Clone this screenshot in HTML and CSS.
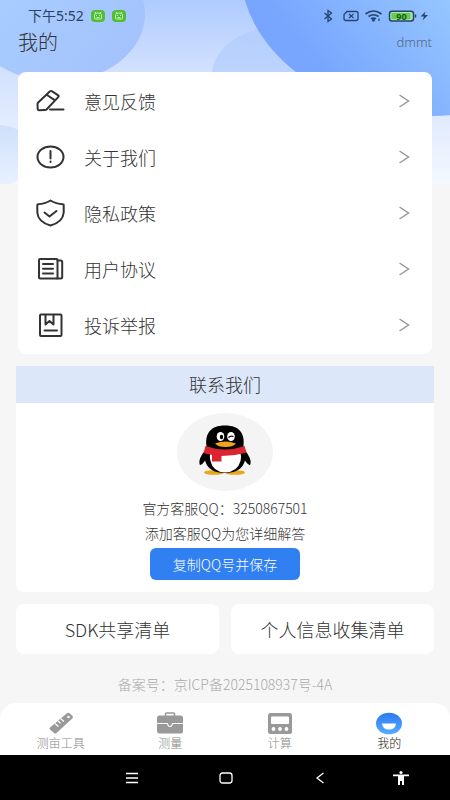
FILE: index.html
```html
<!DOCTYPE html>
<html lang="zh-CN">
<head>
<meta charset="utf-8">
<meta name="viewport" content="width=device-width, initial-scale=1">
<title>我的</title>
<link rel="stylesheet" href="styles.css">
</head>
<body>
<div class="app">
  <svg class="backdrop" viewBox="0 0 450 184" preserveAspectRatio="none" aria-hidden="true">
    <defs>
      <linearGradient id="sky" x1="0" y1="0" x2="0" y2="1"><stop offset="0" stop-color="#aecbff"/><stop offset=".42" stop-color="#d5e3fe"/><stop offset="1" stop-color="#f4f8ff"/></linearGradient>
      <linearGradient id="orbLeft" x1="0" y1="0" x2="1" y2=".6"><stop offset="0" stop-color="#a9d0ff"/><stop offset="1" stop-color="#a4c3fd"/></linearGradient>
      <linearGradient id="orbRight" gradientUnits="userSpaceOnUse" x1="450" y1="0" x2="340" y2="90"><stop offset="0" stop-color="#96c6ff"/><stop offset="1" stop-color="#78a6fe"/></linearGradient>
      <linearGradient id="orbLow" x1="0" y1="0" x2="0" y2="1"><stop offset="0" stop-color="#cfe0fc"/><stop offset="1" stop-color="#e8f1fe"/></linearGradient>
      <linearGradient id="orbMid" x1="0" y1="0" x2="0" y2="1"><stop offset="0" stop-color="#b3cdfd"/><stop offset="1" stop-color="#c8dbfe"/></linearGradient>
    </defs>
    <rect width="450" height="184" fill="url(#sky)"/>
    <ellipse cx="283" cy="75" rx="71" ry="49" fill="url(#orbMid)"/>
    <ellipse cx="57" cy="14" rx="88" ry="68" fill="url(#orbLeft)"/>
    <ellipse cx="-2" cy="155" rx="38" ry="30" fill="url(#orbLow)"/>
    <ellipse cx="432" cy="-33" rx="192" ry="149" fill="url(#orbRight)"/>
  </svg>

  <div class="status">
    <span class="clock">下午5:52</span>
    <svg class="bot" width="14" height="12" viewBox="0 0 14 12"><rect width="14" height="12" rx="4" fill="#4fbe35"/><path d="M3.500 5a3.500 2 0 0 1 7 0v3a1 1 0 0 1-1 1h-5a1 1 0 0 1-1-1zM4 2l1 1.500M10 2L9 3.500" fill="none" stroke="#c9f3b9"/><path d="M5.500 5v1M8.500 5v1M5.500 7.500h3" stroke="#c9f3b9" fill="none"/></svg>
    <svg class="bot" width="14" height="12" viewBox="0 0 14 12"><rect width="14" height="12" rx="4" fill="#4fbe35"/><path d="M3.500 5a3.500 2 0 0 1 7 0v3a1 1 0 0 1-1 1h-5a1 1 0 0 1-1-1zM4 2l1 1.500M10 2L9 3.500" fill="none" stroke="#c9f3b9"/><path d="M5.500 5v1M8.500 5v1M5.500 7.500h3" stroke="#c9f3b9" fill="none"/></svg>
    <svg class="signals" width="106" height="14" viewBox="323 9.500 106 14" fill="none" stroke="#27446f" stroke-width="1.300">
      <path d="M324.500 13.500l7 6-3.500 2.500V11l3.500 2.500-7 6"/>
      <path d="M347 12h9q2 0 2 2v5q0 2-2 2h-10q-2 0-2-2v-4z"/><path d="M349 14.500l4.500 4M353.500 14.500l-4.500 4"/>
      <path d="M365.500 14.500q8-6 16 0M368.500 17q5-3.500 10 0M371 19.300q2.500-1.500 5 0" stroke-width="1.700"/><circle cx="373.500" cy="20.800" r=".8" fill="#27446f"/><path d="M379 19v2.500"/>
      <rect x="389.500" y="11.700" width="24" height="9.800" rx="2.500" fill="#b5dcb5" stroke-width="1.500"/><rect x="391.500" y="13.500" width="19" height="6.200" fill="#64cf4b" stroke="none"/><path d="M415.500 15v3" stroke-width="1.500"/>
      <text x="401.500" y="20" text-anchor="middle" class="charge">90</text>
      <path d="M425.500 12l-5 5h3.500l-1.500 4 5.500-5.500h-3.500z" fill="#27446f" stroke="none"/>
    </svg>
  </div>

  <header class="top">
    <h1>我的</h1>
    <span class="user">dmmt</span>
  </header>

  <main>
    <nav class="menu" aria-label="设置">
      <a href="#feedback"><svg class="icon" viewBox="0 0 28 28"><path d="M14 4.300q1-.8 2.200 0l6 4q1 .8 0 1.800L10.500 22.500q-.5.500-1.500.5L3 23.300q-1.300 0-1.300-1.200L1.500 17q0-.8.700-1.500zM11 8l8 5.300"/><path d="M14 22.500h13.500"/></svg><span>意见反馈</span><svg class="arrow" viewBox="0 0 12 14"><path d="M1.500 1l9 6-9 6"/></svg></a>
      <a href="#about"><svg class="icon" viewBox="0 0 28 28"><ellipse cx="14.500" cy="14" rx="13" ry="10.500"/><path d="M14.500 8v7.500M14.500 18.500v.5"/></svg><span>关于我们</span><svg class="arrow" viewBox="0 0 12 14"><path d="M1.500 1l9 6-9 6"/></svg></a>
      <a href="#privacy"><svg class="icon" viewBox="0 0 28 28"><path d="M14.500 1.500Q9 5 2 5.300q-.7 0-.7.700v7.500Q2 23 14.500 26.500 27 23 27.700 13.500V6q0-.7-.7-.7-7-.3-12.500-3.800z"/><path d="M8.500 13.500l5 4 7-5.500"/></svg><span>隐私政策</span><svg class="arrow" viewBox="0 0 12 14"><path d="M1.500 1l9 6-9 6"/></svg></a>
      <a href="#terms"><svg class="icon" viewBox="0 0 28 28"><rect x="3" y="4" width="18.500" height="19.500" rx="1"/><path d="M21.500 5.500h3.200q1.500 0 1.500 1.500v15q0 1.500-1.500 1.500H21M7 9h10M7 13.800h10M7 18.500h10"/></svg><span>用户协议</span><svg class="arrow" viewBox="0 0 12 14"><path d="M1.500 1l9 6-9 6"/></svg></a>
      <a href="#report"><svg class="icon" viewBox="0 0 28 28"><rect x="4" y="3.500" width="21.500" height="21.500" rx="1"/><path d="M9.500 4v9.500l4-3.500 4 3.500V4M8.500 19.500h12.500"/></svg><span>投诉举报</span><svg class="arrow" viewBox="0 0 12 14"><path d="M1.500 1l9 6-9 6"/></svg></a>
    </nav>

    <section class="contact">
      <h2>联系我们</h2>
      <div class="contact-body">
        <svg class="avatar" width="96" height="78" viewBox="0 0 96 78" role="img" aria-label="QQ">
          <ellipse cx="48" cy="39" rx="48" ry="39" fill="#f4f4f4"/>
          <ellipse cx="37" cy="59.500" rx="10" ry="2.300" fill="#e9a51c"/><ellipse cx="58" cy="59.500" rx="10" ry="2.300" fill="#e9a51c"/>
          <path d="M29 36Q21 46 22.500 51q1 3 6-4M67 36q8 10 6.500 15-1 3-6-4" fill="#000"/>
          <path d="M29.500 33C28 21 33 12.500 48 12.500S68 21 66.500 33q4 9 1 16-4 11-19.500 11t-19.500-11q-3-7 1-16z" fill="#000"/>
          <path d="M33 40h30.500q1 3 0 8-3 11-15.500 11.500Q36 59 33.500 48q-1-5-.5-8z" fill="#fff"/>
          <path d="M28.500 33q19.500 7 39 0l2 6.500q-10 3-25 3.500v5.500h-9.500v-6.500q-5-.8-8.500-2z" fill="#dc2430"/>
          <ellipse cx="43.500" cy="23.500" rx="3.800" ry="4.500" fill="#fff"/><ellipse cx="54" cy="23.500" rx="3.800" ry="4.500" fill="#fff"/>
          <ellipse cx="44.500" cy="24" rx="1.700" ry="2.200" fill="#000"/><path d="M51.500 24.500q2-2 5-1" fill="none" stroke="#000" stroke-width="1.300"/>
          <path d="M38 30.500q10-4 21 0-3 3.500-10.500 3.500T38 30.500z" fill="#f4a321"/>
        </svg>
        <p>官方客服QQ：3250867501</p>
        <p>添加客服QQ为您详细解答</p>
        <button type="button" class="copy">复制QQ号并保存</button>
      </div>
    </section>

    <div class="lists">
      <a href="#sdk">SDK共享清单</a>
      <a href="#collect">个人信息收集清单</a>
    </div>
    <p class="record">备案号：京ICP备2025108937号-4A</p>
  </main>

  <nav class="tabs" aria-label="主导航">
    <a href="#tools"><svg width="28" height="24" viewBox="0 0 28 24"><path d="M3 16.500L20 2.300q1.500-1 2.500 0l3 2.700q1 1.200 0 2.300L9.500 22q-1.300 1-2.500 0l-4-3.500q-1-1 0-2z" fill="#999"/><path d="M8 12.500l3.500 3M11 10l2.500 2.200M13.500 7.500l3.500 3" stroke="#fff" stroke-width="1.200"/><circle cx="21.500" cy="6" r="1.300" fill="#fff"/></svg><span>测亩工具</span></a>
    <a href="#measure"><svg width="28" height="24" viewBox="0 0 28 24"><path d="M9.500 5V3q0-1 1-1h7q1 0 1 1v2" fill="none" stroke="#999" stroke-width="1.600"/><rect x="1" y="4.500" width="26" height="18" rx="2.500" fill="#999"/><path d="M1 12.500h10.500q.5 3 2.500 3t2.500-3H27" stroke="#fff" stroke-width="1.200" fill="none"/></svg><span>测量</span></a>
    <a href="#calc"><svg width="28" height="24" viewBox="0 0 28 24"><rect x="2" y="2" width="24" height="21" rx="2.500" fill="#999"/><rect x="5" y="5.500" width="18" height="7.500" rx="1" fill="#fff"/><circle cx="7.500" cy="18" r="1.900" fill="#fff"/><circle cx="14" cy="18" r="1.900" fill="#fff"/><circle cx="20.500" cy="18" r="1.900" fill="#fff"/></svg><span>计算</span></a>
    <a href="#mine" class="active" aria-current="page"><svg width="28" height="24" viewBox="0 0 28 24"><defs><linearGradient id="face" x1="0" y1="0" x2="0" y2="1"><stop offset="0" stop-color="#2b7af0"/><stop offset="1" stop-color="#58abff"/></linearGradient></defs><ellipse cx="14" cy="12.500" rx="13" ry="10.800" fill="url(#face)"/><path d="M7 12.500h14q-.5 6-7 6t-7-6z" fill="#fff"/></svg><span>我的</span></a>
  </nav>

  <div class="system">
    <svg width="14" height="14" viewBox="0 0 14 14"><path d="M1 2.500h12M1 7h12M1 11.500h12"/></svg>
    <svg width="14" height="14" viewBox="0 0 14 14"><rect x="1" y="2" width="12" height="10" rx="2.500"/></svg>
    <svg width="14" height="14" viewBox="0 0 14 14"><path d="M10.500 2L4 7l6.500 5"/></svg>
    <svg class="assist" width="16" height="16" viewBox="0 0 16 16"><g fill="#fff" stroke="none"><circle cx="8" cy="2.500" r="1.600"/><path d="M0 4.500h16v1.800h-5V15H9v-4H7v4H5V6.300H0z"/></g></svg>
  </div>
</div>
</body>
</html>
```
FILE: styles.css
```css
* { box-sizing: border-box; }

body {
  margin: 0;
  background: #f6f6f6;
  color: #333;
  font-family: "Noto Sans CJK SC", "Noto Sans", sans-serif;
  font-weight: 300;
}

h1, h2, p { margin: 0; font-weight: inherit; }
a { color: inherit; text-decoration: none; }
svg { display: block; flex: none; }

.app {
  position: relative;
  display: flex;
  flex-direction: column;
  min-height: 100vh;
}

.backdrop {
  position: absolute;
  top: 0;
  left: 0;
  z-index: -1;
  width: 100%;
  height: 184px;
}

.status {
  display: flex;
  align-items: center;
  gap: 7px;
  padding: 6px 21px 0 28px;
  font-size: 14px;
  line-height: 20px;
  color: #2c4164;
}
.clock {
  font-family: "Noto Sans", "Noto Sans CJK SC", sans-serif;
  font-weight: 400;
}
.signals { margin-left: auto; }
.charge {
  font: 700 9px "Noto Sans", sans-serif;
  fill: #175b22;
  stroke: none;
}

.top {
  display: flex;
  align-items: center;
  justify-content: space-between;
  height: 46px;
  padding: 0 18px 14px;
}
h1 {
  font-size: 20px;
  line-height: 32px;
}
.user {
  font-family: "Noto Sans", sans-serif;
  font-size: 13px;
  color: #526783;
}

main { flex: 1; padding: 0 16px; }

.menu {
  margin: 0 2px 12px;
  padding: 1px 0;
  background: #fff;
  border-radius: 8px;
}
.menu a {
  display: flex;
  align-items: center;
  gap: 20px;
  height: 56px;
  padding: 0 22px 0 18px;
  font-size: 18px;
}
.icon {
  width: 28px;
  height: 28px;
  overflow: visible;
  fill: none;
  stroke: #333;
  stroke-width: 2;
  stroke-linecap: round;
  stroke-linejoin: round;
}
.arrow {
  width: 12px;
  height: 14px;
  margin-left: auto;
  fill: none;
  stroke: #999;
  stroke-width: 1.5;
}

.contact {
  overflow: hidden;
  background: #fff;
  border-radius: 0 0 8px 8px;
}
.contact h2 {
  background: #dce8fa;
  font-size: 18px;
  line-height: 37px;
  text-align: center;
}
.contact-body {
  display: flex;
  flex-direction: column;
  align-items: center;
  padding: 10px 0 12px;
}
.avatar { margin-bottom: 5px; }
.contact p {
  font-size: 14px;
  line-height: 25px;
}
.copy {
  width: 150px;
  height: 32px;
  margin-top: 2px;
  padding: 0;
  border: 0;
  border-radius: 6px;
  background: #3080f2;
  color: #fff;
  font: inherit;
  font-size: 14px;
}

.lists {
  display: grid;
  grid-template-columns: 1fr 1fr;
  gap: 12px;
  margin-top: 12px;
}
.lists a {
  background: #fff;
  border-radius: 8px;
  font-size: 18px;
  line-height: 50px;
  text-align: center;
}
.record {
  padding: 18px 0 6px;
  font-size: 14px;
  line-height: 24px;
  text-align: center;
  color: #aaa;
}

.tabs {
  display: grid;
  grid-template-columns: repeat(4, 1fr);
  padding: 8px 6px 4px;
  background: #fff;
  border-radius: 16px 16px 0 0;
}
.tabs a {
  display: flex;
  flex-direction: column;
  align-items: center;
  font-size: 12px;
  line-height: 16px;
  color: #888;
}
.tabs .active { color: #222; }

.system {
  display: flex;
  align-items: center;
  gap: 80px;
  height: 45px;
  padding: 0 42px 0 125px;
  background: #000;
}
.system svg {
  fill: none;
  stroke: #fff;
  stroke-width: 1.3;
}
.system .assist { margin-left: -14px; }
```
